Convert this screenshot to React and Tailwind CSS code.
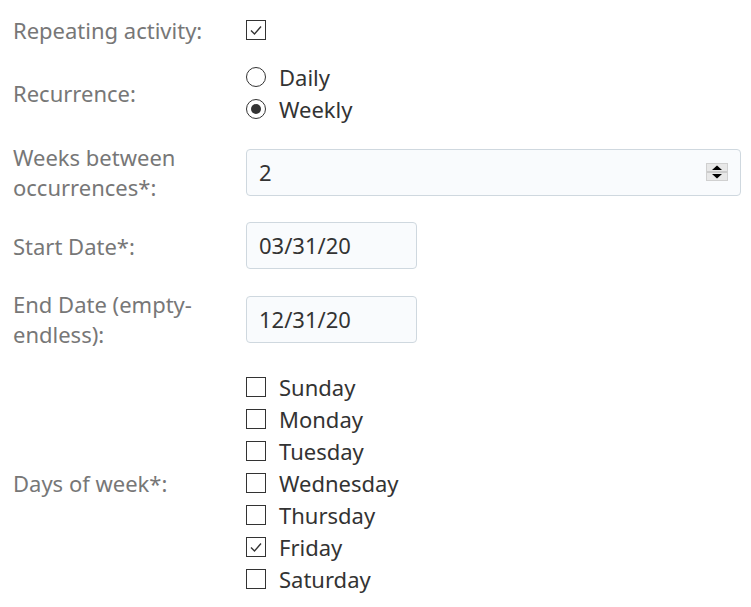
import React from 'react';

const font = { fontFamily: '"Noto Sans", "Open Sans", sans-serif' };

const Check = ({ checked }) => (
  <span className="flex h-[20px] w-[20px] shrink-0 items-center justify-center border border-[#333] bg-white">
    {checked && (
      <svg width="14" height="14" viewBox="0 0 14 14" fill="none">
        <path d="M2 7.5 L5.5 11 L12 3.5" stroke="#333" strokeWidth="1.4" />
      </svg>
    )}
  </span>
);

const Radio = ({ checked }) => (
  <span className="flex h-[20px] w-[20px] shrink-0 items-center justify-center rounded-full border border-[#333] bg-white">
    {checked && <span className="h-[10px] w-[10px] rounded-full bg-[#333]" />}
  </span>
);

const Row = ({ label, children, className }) => (
  <div className={`grid grid-cols-[233px_1fr] items-center ${className}`}>
    <div className="text-[22px] leading-[30px] text-[#777]">{label}</div>
    <div>{children}</div>
  </div>
);

const Field = ({ value, wide, spinner }) => (
  <div
    className={`flex h-[47px] items-center justify-between rounded-[4px] border border-[#cfd8df] bg-[#f9fbfd] px-[12px] text-[22px] text-[#333] ${wide ? 'w-[495px]' : 'w-[171px]'}`}
  >
    <span>{value}</span>
    {spinner && (
      <svg width="22" height="18" viewBox="0 0 22 18">
        <rect x="0.5" y="0.5" width="21" height="17" fill="#e8e8e8" stroke="#d0d0d0" />
        <line x1="1" y1="9" x2="21" y2="9" stroke="#b0b0b0" />
        <path d="M6 7 L11 2.5 L16 7 Z" fill="#000" />
        <path d="M6 11 L11 15.5 L16 11 Z" fill="#000" />
      </svg>
    )}
  </div>
);

const days = ['Sunday', 'Monday', 'Tuesday', 'Wednesday', 'Thursday', 'Friday', 'Saturday'];

export default function App() {
  return (
    <div className="h-[607px] w-[751px] bg-white pl-[13px] pr-[10px] pt-[14px]" style={font}>
      <Row label="Repeating activity:" className="mb-[15px]">
        <div className="flex h-[32px] items-center">
          <Check checked />
        </div>
      </Row>
      <Row label="Recurrence:" className="mb-[17px]">
        <div className="text-[22px] leading-[32px] text-[#333]">
          <label className="flex items-center gap-[13px]">
            <Radio />
            <span>Daily</span>
          </label>
          <label className="flex items-center gap-[13px]">
            <Radio checked />
            <span>Weekly</span>
          </label>
        </div>
      </Row>
      <Row label={<>Weeks between<br />occurrences*:</>} className="mb-[20px]">
        <Field value="2" wide spinner />
      </Row>
      <Row label="Start Date*:" className="mb-[20px]">
        <Field value="03/31/20" />
      </Row>
      <Row label={<>End Date (empty-<br />endless):</>} className="mb-[22px]">
        <Field value="12/31/20" />
      </Row>
      <Row label="Days of week*:">
        <div className="text-[22px] leading-[32px] text-[#333]">
          {days.map((d) => (
            <label key={d} className="flex items-center gap-[13px]">
              <Check checked={d === 'Friday'} />
              <span>{d}</span>
            </label>
          ))}
        </div>
      </Row>
    </div>
  );
}
